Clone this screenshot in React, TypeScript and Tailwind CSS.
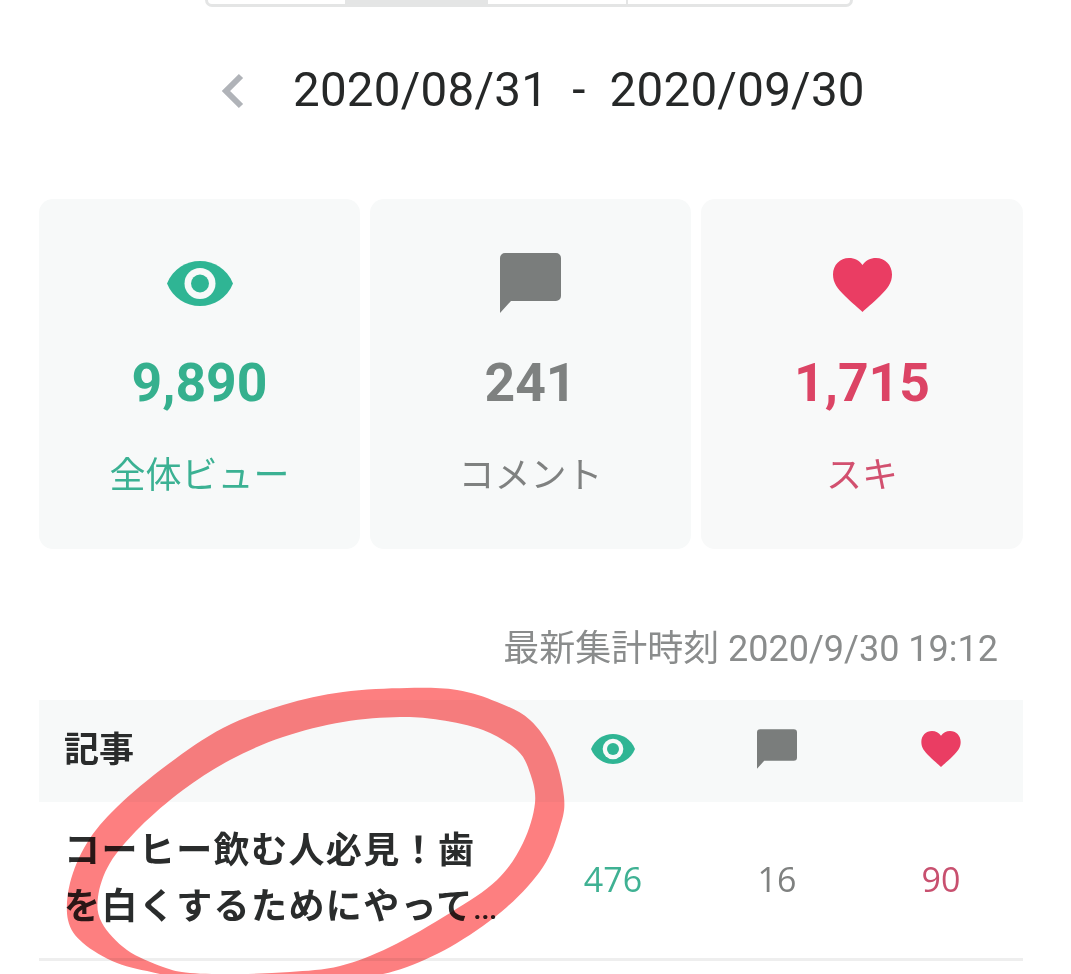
import React from "react";

type P = [number, number];

function closedCurve(pts: P[]): string {
  const n = pts.length;
  let d = `M${pts[0][0]} ${pts[0][1]}`;
  for (let i = 0; i < n; i++) {
    const p0 = pts[(i - 1 + n) % n];
    const p1 = pts[i];
    const p2 = pts[(i + 1) % n];
    const p3 = pts[(i + 2) % n];
    const c1x = p1[0] + (p2[0] - p0[0]) / 6;
    const c1y = p1[1] + (p2[1] - p0[1]) / 6;
    const c2x = p2[0] - (p3[0] - p1[0]) / 6;
    const c2y = p2[1] - (p3[1] - p1[1]) / 6;
    d += ` C${c1x.toFixed(1)} ${c1y.toFixed(1)} ${c2x.toFixed(1)} ${c2y.toFixed(1)} ${p2[0]} ${p2[1]}`;
  }
  return d + " Z";
}

const outer: P[] = [[407,688],[457,690],[497,702],[530,720],[553,753],[564,797],[560,827],[543,867],[507,907],[457,943],[407,967],[363,978],[300,988],[230,990],[160,974],[117,963],[83,943],[68,920],[70,883],[87,843],[117,807],[167,765],[223,728],[283,705],[343,692]];
const inner: P[] = [[400,717],[440,720],[483,730],[517,750],[530,773],[535,803],[523,843],[497,880],[450,913],[390,947],[340,966],[290,972],[240,974],[190,973],[163,967],[127,950],[102,923],[98,897],[110,863],[140,827],[183,790],[230,760],[283,737],[343,722]];

function Eye({ w, h, bg }: { w: number; h: number; bg: string }) {
  return (
    <svg width={w} height={h} viewBox="0 0 66 45" aria-hidden="true">
      <path d="M0 22.5C6 8 19 0 33 0s27 8 33 22.500C60 37 47 45 33 45S6 37 0 22.500Z" fill="#2fb594" />
      <circle cx="33" cy="22.5" r="15.500" fill={bg} />
      <circle cx="33" cy="22.5" r="9" fill="#2fb594" />
    </svg>
  );
}

function Bubble({ w, h }: { w: number; h: number }) {
  return (
    <svg width={w} height={h} viewBox="0 0 61 60" aria-hidden="true">
      <path d="M5 0h51a5 5 0 0 1 5 5v38a5 5 0 0 1-5 5H11L0 60V5a5 5 0 0 1 5-5Z" fill="#7a7d7c" />
    </svg>
  );
}

function Heart({ w, h }: { w: number; h: number }) {
  return (
    <svg width={w} height={h} viewBox="0 0 59 54" aria-hidden="true">
      <path d="M29.5 54C26 50.500 19 45 12 38 4.500 30.500 0 25 0 16.500 0 7 7 0 16 0c5.500 0 10.500 2.500 13.500 7C32.500 2.500 37.500 0 43 0c9 0 16 7 16 16.500 0 8.500-4.500 14-12 21.500-7 7-14 12.500-17.500 16Z" fill="#ea3d63" />
    </svg>
  );
}

export default function App() {
  return (
    <div className="relative h-[974px] w-[1071px] overflow-hidden bg-white font-['Roboto','Noto_Sans_CJK_JP',sans-serif]">
      {/* cropped segmented control */}
      <div className="ml-[205px] grid h-[7px] w-[648px] grid-cols-[137px_143px_140px_1fr] overflow-hidden rounded-b-[10px] border-x-[3px] border-b-[3px] border-[#e4e5e5]">
        <div />
        <div className="bg-[#e4e5e5]" />
        <div className="border-r-[2px] border-[#e4e5e5]" />
        <div />
      </div>

      {/* date range */}
      <div className="mt-[54px] flex h-[60px] items-center pl-[221px] text-[47.5px] text-[#262828]">
        <svg width="24" height="36" viewBox="0 0 24 36" aria-hidden="true">
          <path d="M20 3 5 18l15 15" fill="none" stroke="#b0b3b8" strokeWidth="6" />
        </svg>
        <span className="ml-[48px] whitespace-pre tracking-[0.24px]">2020/08/31  -  2020/09/30</span>
      </div>

      <div className="pl-[39px] pr-[48px]">
        {/* summary cards */}
        <div className="mt-[78px] grid grid-cols-[321px_321px_322px] gap-[10px]">
          <div className="flex h-[350px] flex-col items-center rounded-[14px] bg-[#f7f9f9] pt-[54px]">
            <div className="flex h-[60px] items-center"><Eye w={66} h={45} bg="#f7f9f9" /></div>
            <div className="mt-[40px] flex h-[60px] items-center text-[53.5px] font-bold text-[#35b08e]">9,890</div>
            <div className="mt-[38px] flex h-[50px] items-center text-[36px] text-[#3bb193]">全体ビュー</div>
          </div>
          <div className="flex h-[350px] flex-col items-center rounded-[14px] bg-[#f7f9f9] pt-[54px]">
            <div className="flex h-[60px] items-center"><Bubble w={61} h={60} /></div>
            <div className="mt-[40px] flex h-[60px] items-center text-[53.5px] font-bold text-[#7e8180]">241</div>
            <div className="mt-[38px] flex h-[50px] items-center text-[36px] text-[#7f8180]">コメント</div>
          </div>
          <div className="flex h-[350px] flex-col items-center rounded-[14px] bg-[#f8f9f9] pt-[54px]">
            <div className="flex h-[60px] items-center pt-[4px]"><Heart w={59} h={54} /></div>
            <div className="mt-[40px] flex h-[60px] items-center text-[53.5px] font-bold text-[#dc4465]">1,715</div>
            <div className="mt-[38px] flex h-[50px] items-center text-[36px] text-[#d2506f]">スキ</div>
          </div>
        </div>

        {/* timestamp */}
        <div className="mt-[80px] flex h-[40px] items-center justify-end pr-[25px] text-[36px] text-[#8a8c8c]">
          最新集計時刻 2020/9/30 19:12
        </div>

        {/* table */}
        <div className="mt-[31px]">
          <div className="grid h-[102px] grid-cols-[492px_164px_164px_164px] items-center bg-[#f7f9f9] pb-[4px]">
            <div className="pl-[25px] pt-[4px] text-[35px] font-bold text-[#2a2c2c]">記事</div>
            <div className="flex justify-center"><Eye w={44} h={30} bg="#f7f9f9" /></div>
            <div className="flex justify-center"><Bubble w={40} h={40} /></div>
            <div className="flex justify-center"><Heart w={40} h={36} /></div>
          </div>
          <div className="grid h-[159px] grid-cols-[492px_164px_164px_164px] items-center border-b-[3px] border-[#eeeeee]">
            <div className="whitespace-nowrap pl-[25px] text-[36px] font-bold leading-[56px] tracking-[1.4px] text-[#2a2c2c]">
              <div>コーヒー飲む人必見！歯</div>
              <div>を白くするためにやって<span className="text-[27px] tracking-normal">...</span></div>
            </div>
            <div className="pb-[2px] text-center font-['Open_Sans',sans-serif] text-[34px] text-[#3fb193]">476</div>
            <div className="pb-[2px] text-center font-['Open_Sans',sans-serif] text-[34px] text-[#7f8180]">16</div>
            <div className="pb-[2px] text-center font-['Open_Sans',sans-serif] text-[34px] text-[#c8506f]">90</div>
          </div>
        </div>
      </div>

      {/* hand-drawn red circle annotation */}
      <svg className="pointer-events-none absolute left-0 top-0 mix-blend-multiply" width="1071" height="974" viewBox="0 0 1071 974" aria-hidden="true">
        <path d={closedCurve(outer) + " " + closedCurve(inner)} fill="#fd7f80" fillRule="evenodd" />
      </svg>
    </div>
  );
}
